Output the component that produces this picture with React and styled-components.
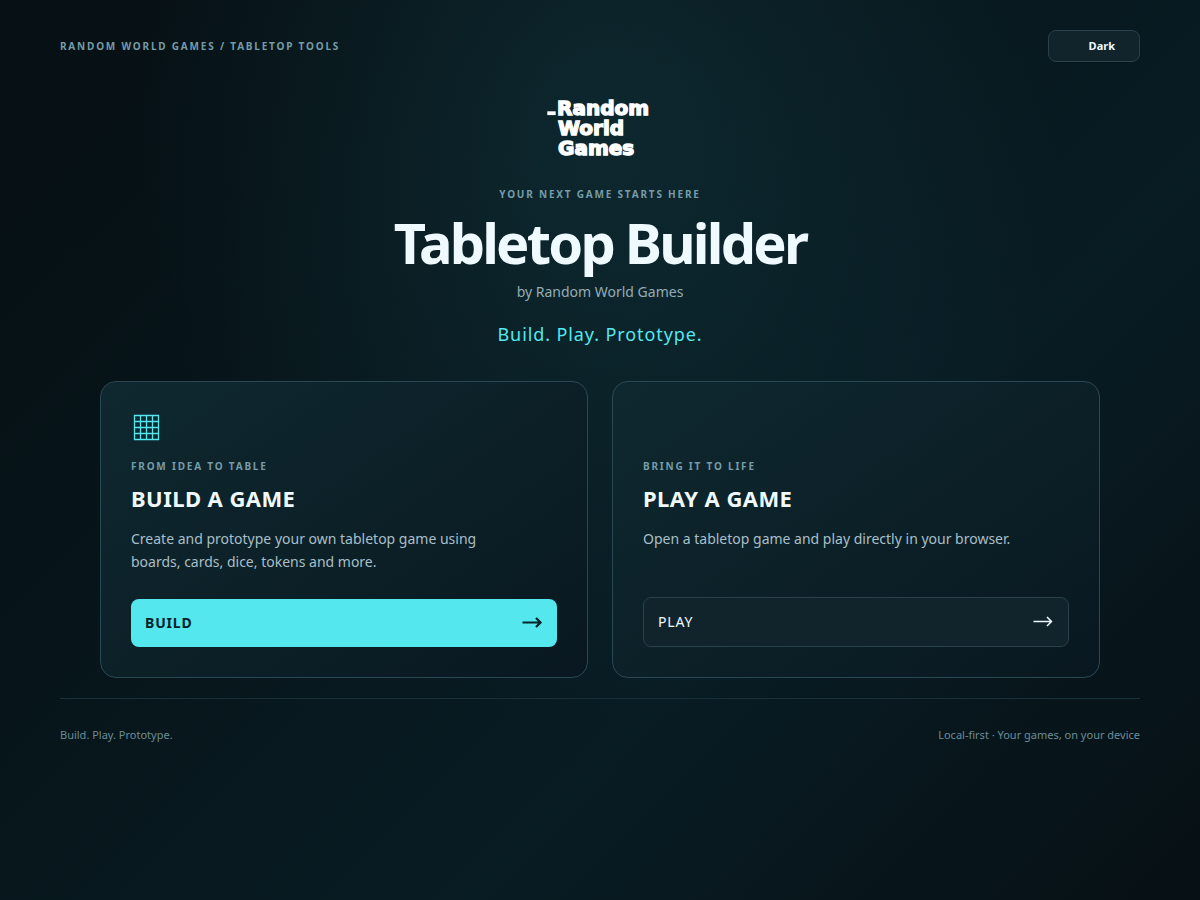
import { useState } from "react";
import styled, { createGlobalStyle, css } from "styled-components";

const GlobalStyle = createGlobalStyle`
  * {
    box-sizing: border-box;
  }
  body {
    margin: 0;
    background: #071014;
    color: #effaff;
    font-family: "Noto Sans", sans-serif;
  }
  h1, h2, p {
    margin: 0;
  }
`;

const StyledPage = styled.div`
  min-height: 100vh;
  padding: 30px 60px;
  background:
    radial-gradient(ellipse at 50% 15%, rgba(25, 70, 80, 0.38), transparent 54%),
    linear-gradient(135deg, #071015 0%, #061216 20%, #081c23 65%, #071014 100%);
`;

const StyledHeader = styled.header`
  display: flex;
  justify-content: space-between;
  align-items: center;
`;

const StyledEyebrow = styled.p`
  color: #759ca8;
  font-size: 10px;
  font-weight: 700;
  line-height: 14px;
  letter-spacing: 0.18em;
  text-transform: uppercase;
`;

const StyledThemeButton = styled.button`
  width: 92px;
  height: 32px;
  padding: 0 24px 0 0;
  border: 1px solid #29414a;
  border-radius: 8px;
  background: #11242c;
  color: #effaff;
  font: 700 11px/16px "Noto Sans", sans-serif;
  text-align: right;
  cursor: pointer;
`;

const StyledHero = styled.section`
  display: flex;
  flex-direction: column;
  align-items: center;
  padding-top: 34px;
  text-align: center;
`;

const StyledLogo = styled.svg`
  display: block;
  width: 112px;
  height: 64px;
  margin-bottom: 27px;
  fill: #fff;
  stroke: #fff;
  stroke-width: 1.4;
  font-family: "DejaVu Sans", sans-serif;
  font-size: 20px;
  font-weight: 700;
`;

const StyledTitle = styled.h1`
  margin-top: 10px;
  font-size: 56px;
  font-weight: 700;
  line-height: 62px;
  letter-spacing: -0.05em;
`;

const StyledByline = styled.p`
  margin-top: 9px;
  color: #93adb6;
  font-size: 14px;
  line-height: 20px;
`;

const StyledTagline = styled.p`
  margin-top: 19px;
  color: #54e8ee;
  font-size: 18px;
  line-height: 26px;
  letter-spacing: 0.05em;
`;

const StyledCards = styled.section`
  display: grid;
  grid-template-columns: 1fr 1fr;
  gap: 24px;
  max-width: 1000px;
  margin: 34px auto 20px;
`;

const StyledCard = styled.article`
  display: flex;
  flex-direction: column;
  padding: 30px;
  border: 1px solid #2a4853;
  border-radius: 16px;
  background: linear-gradient(145deg, #0f282f, #091820);

  h2 {
    margin-top: 10px;
    font-size: 22px;
    line-height: 30px;
    letter-spacing: 0.02em;
  }
`;

const StyledCardIcon = styled.div`
  height: 47px;
  padding: 2px;
  color: #54e8ee;
`;

const StyledCardText = styled.p`
  max-width: 390px;
  min-height: 46px;
  margin: 14px 0 24px;
  color: #a8bfc8;
  font-size: 14px;
  line-height: 23px;
`;

const StyledAction = styled.a`
  display: flex;
  justify-content: space-between;
  align-items: center;
  height: 50px;
  margin-top: auto;
  padding: 0 14px;
  border: 1px solid #29414a;
  border-radius: 8px;
  background: #11242c;
  color: #effaff;
  font-size: 14px;
  line-height: 20px;
  letter-spacing: 0.06em;
  text-decoration: none;

  ${({ $primary }) =>
    $primary &&
    css`
      height: 48px;
      border: 0;
      background: #54e8ee;
      color: #06222a;
      font-weight: 700;
    `}
`;

const StyledFooter = styled.footer`
  display: flex;
  justify-content: space-between;
  padding-top: 28px;
  border-top: 1px solid #18303a;
  color: #6b8c97;
  font-size: 11px;
  line-height: 16px;
`;

const cards = [
  {
    icon: <GridIcon />,
    eyebrow: "From idea to table",
    title: "BUILD A GAME",
    text: "Create and prototype your own tabletop game using boards, cards, dice, tokens and more.",
    action: "BUILD",
    href: "#build",
    primary: true,
  },
  {
    icon: null,
    eyebrow: "Bring it to life",
    title: "PLAY A GAME",
    text: "Open a tabletop game and play directly in your browser.",
    action: "PLAY",
    href: "#play",
    primary: false,
  },
];

function Logo() {
  return (
    <StyledLogo viewBox="0 0 112 64" role="img" aria-label="Random World Games">
      <rect x="4" y="16" width="7" height="2.4" />
      <text x="13" y="19" fontSize="20">
        Random
      </text>
      <text x="14" y="39">World</text>
      <text x="14" y="59">Games</text>
    </StyledLogo>
  );
}

function GridIcon() {
  return (
    <svg width="28" height="28" viewBox="0 0 28 28" fill="none" stroke="currentColor">
      <path
        strokeWidth="1.3"
        d="M1.5 1.5h24v24h-24zM7.5 1.5v24M13.5 1.5v24M19.5 1.5v24M1.5 7.5h24M1.5 13.5h24M1.5 19.5h24"
      />
    </svg>
  );
}

function Arrow({ bold }) {
  return (
    <svg
      width="22"
      height="16"
      viewBox="0 0 22 16"
      fill="none"
      stroke="currentColor"
      strokeWidth={bold ? 2.2 : 1.5}
      aria-hidden="true"
    >
      <path d="M1.5 7.5h18M15 3l4.5 4.5L15 12" />
    </svg>
  );
}

export default function App() {
  const [theme, setTheme] = useState("Dark");

  return (
    <>
      <GlobalStyle />
      <StyledPage>
        <StyledHeader>
          <StyledEyebrow>Random World Games / Tabletop Tools</StyledEyebrow>
          <StyledThemeButton
            type="button"
            onClick={() => setTheme(theme === "Dark" ? "Light" : "Dark")}
          >
            {theme}
          </StyledThemeButton>
        </StyledHeader>
        <main>
          <StyledHero>
            <Logo />
            <StyledEyebrow>Your next game starts here</StyledEyebrow>
            <StyledTitle>Tabletop Builder</StyledTitle>
            <StyledByline>by Random World Games</StyledByline>
            <StyledTagline>Build. Play. Prototype.</StyledTagline>
          </StyledHero>
          <StyledCards>
            {cards.map((card) => (
              <StyledCard key={card.title}>
                <StyledCardIcon aria-hidden="true">{card.icon}</StyledCardIcon>
                <StyledEyebrow>{card.eyebrow}</StyledEyebrow>
                <h2>{card.title}</h2>
                <StyledCardText>{card.text}</StyledCardText>
                <StyledAction href={card.href} $primary={card.primary}>
                  {card.action}
                  <Arrow bold={card.primary} />
                </StyledAction>
              </StyledCard>
            ))}
          </StyledCards>
        </main>
        <StyledFooter>
          <p>Build. Play. Prototype.</p>
          <p>Local-first · Your games, on your device</p>
        </StyledFooter>
      </StyledPage>
    </>
  );
}
